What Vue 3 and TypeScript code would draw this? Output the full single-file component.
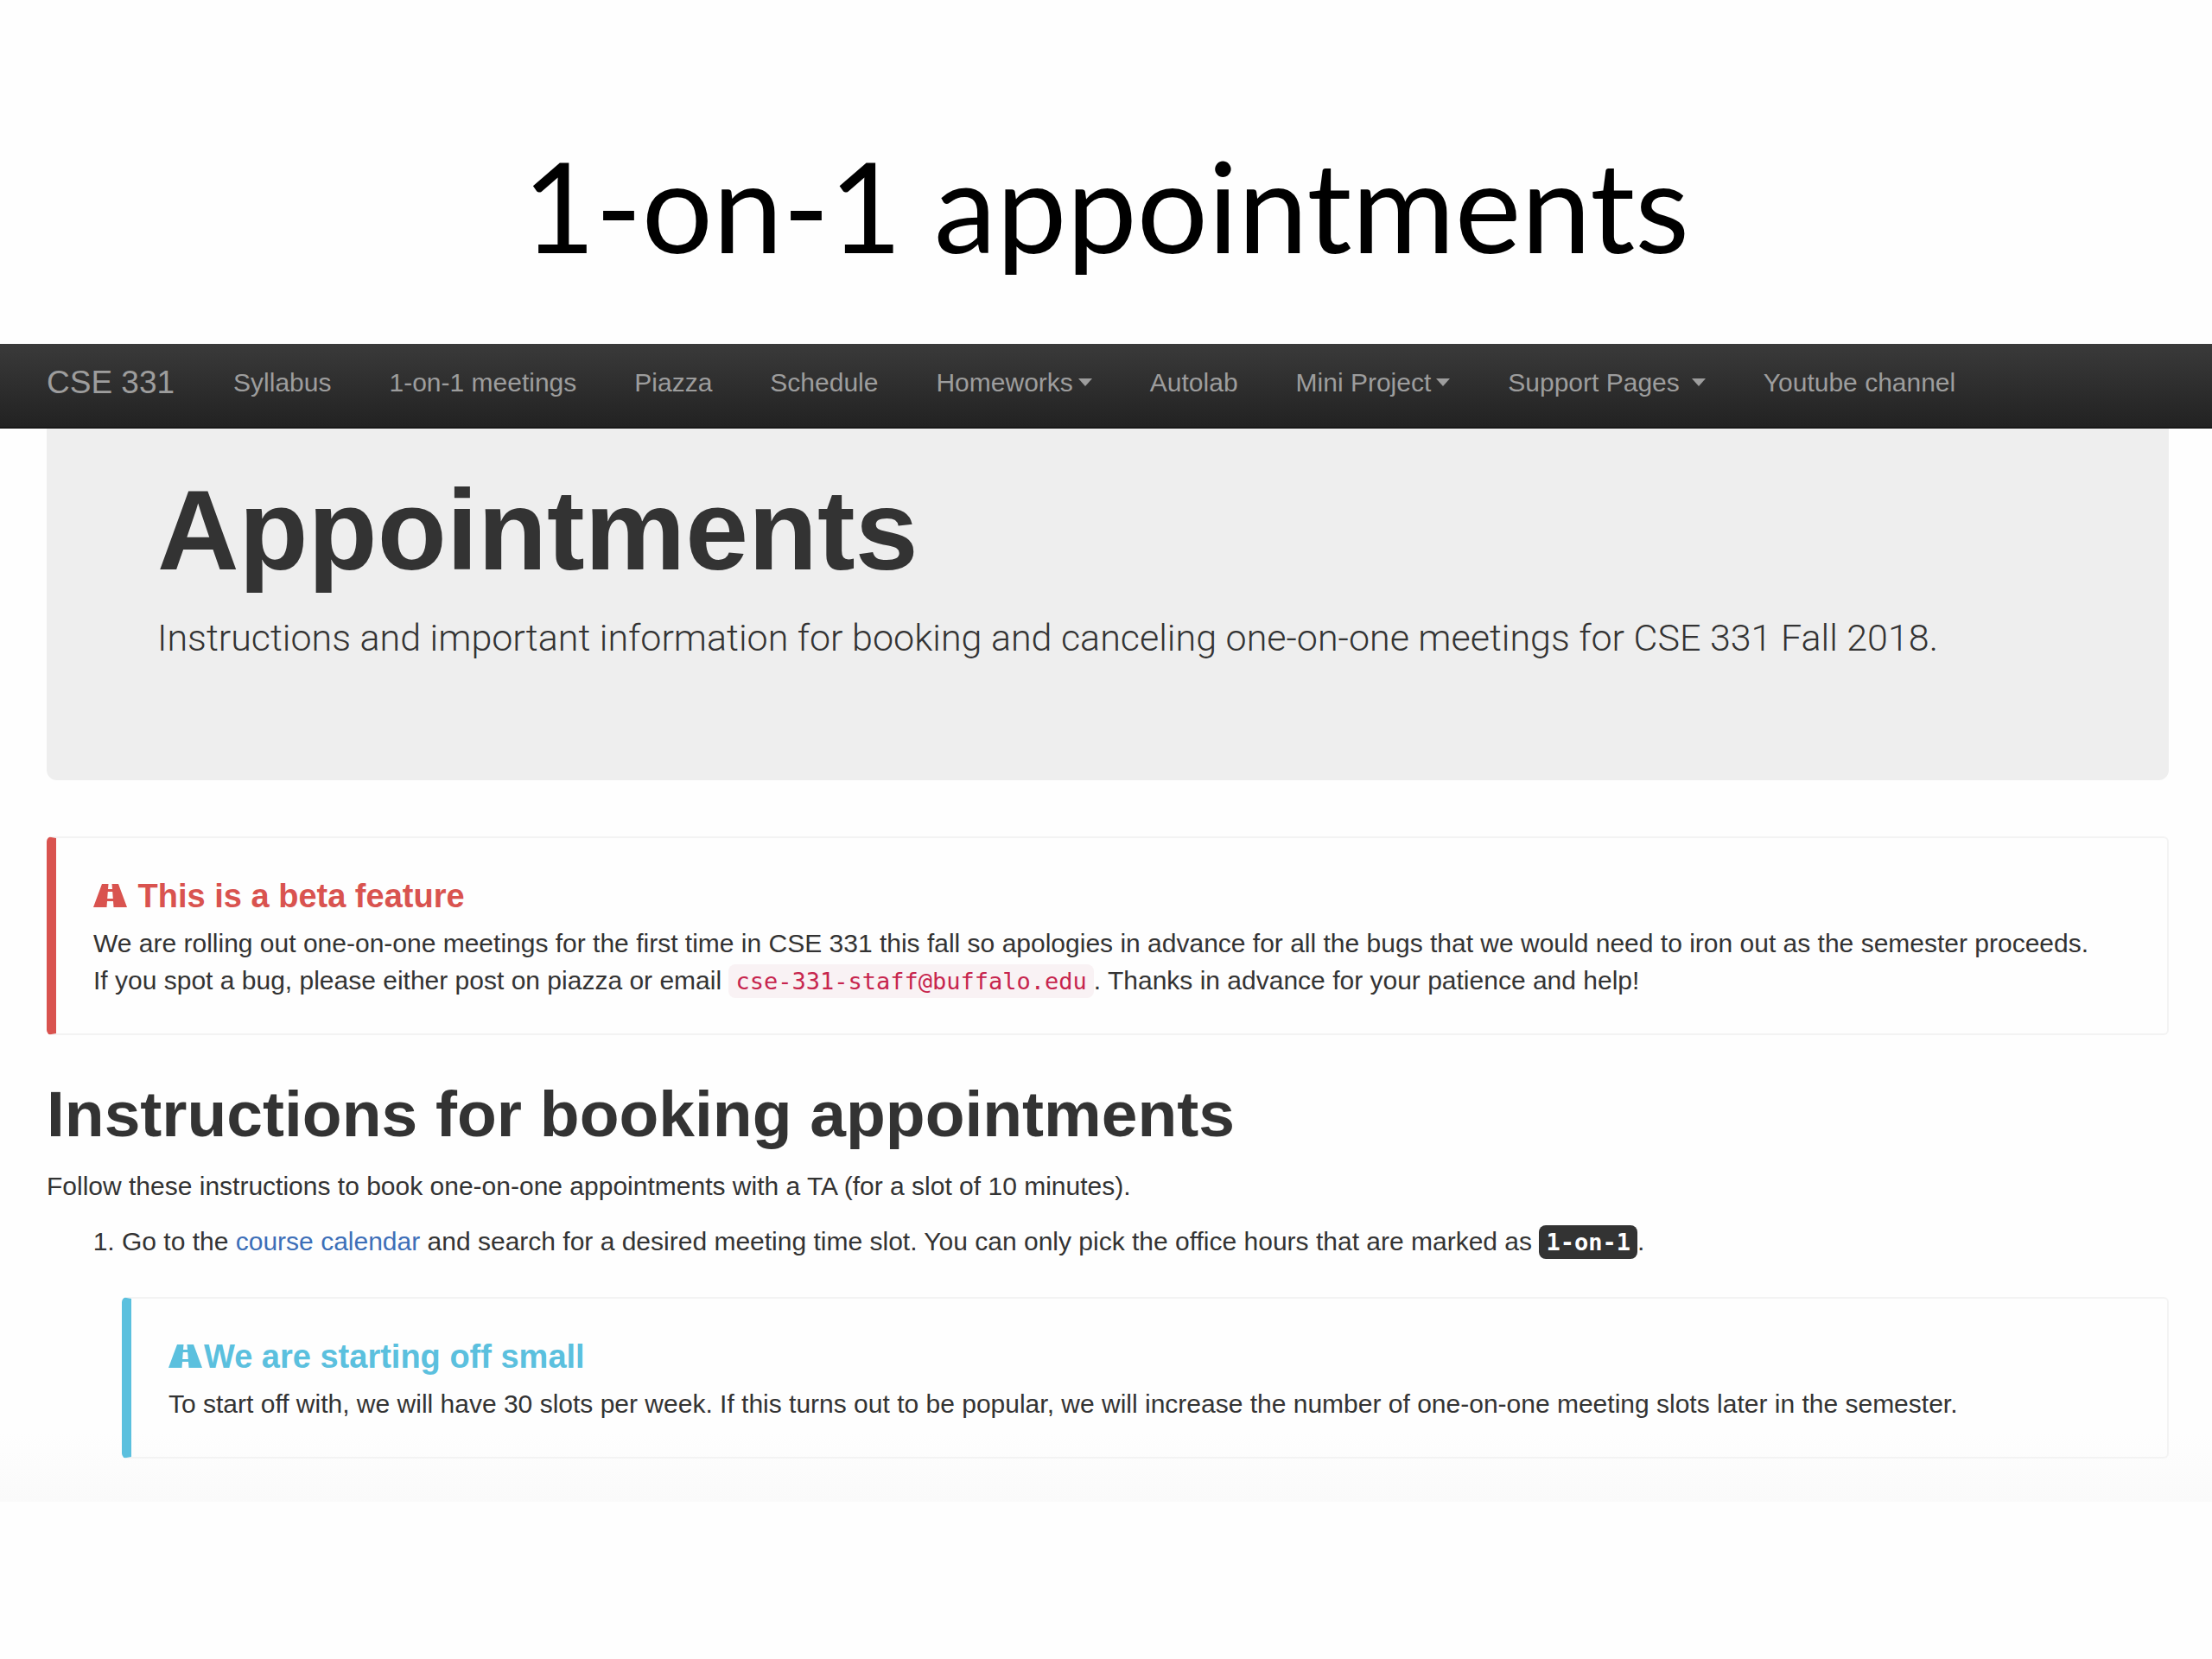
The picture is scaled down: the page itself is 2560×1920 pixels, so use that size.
<script setup lang="ts">
interface NavItem {
  label: string
  menu?: boolean
  spaced?: boolean
}

const navItems: NavItem[] = [
  { label: 'Syllabus' },
  { label: '1-on-1 meetings' },
  { label: 'Piazza' },
  { label: 'Schedule' },
  { label: 'Homeworks', menu: true },
  { label: 'Autolab' },
  { label: 'Mini Project', menu: true },
  { label: 'Support Pages', menu: true, spaced: true },
  { label: 'Youtube channel' },
]
</script>

<template>
  <div class="slide">
    <h1 class="slide-title">1-on-1 appointments</h1>

    <div class="site">
      <nav class="navbar" aria-label="Main">
        <a class="brand" href="#">CSE 331</a>
        <ul class="nav-list">
          <li v-for="item in navItems" :key="item.label">
            <button v-if="item.menu" type="button" class="nav-link" :class="{ spaced: item.spaced }">
              {{ item.label }}<span class="caret"></span>
            </button>
            <a v-else class="nav-link" href="#">{{ item.label }}</a>
          </li>
        </ul>
      </nav>

      <main class="container">
        <header class="jumbotron">
          <h1>Appointments</h1>
          <p>Instructions and important information for booking and canceling one-on-one meetings for CSE 331 Fall 2018.</p>
        </header>

        <section class="callout danger">
          <h4>
            <svg class="road" viewBox="0 0 39 27" aria-hidden="true">
              <path fill-rule="evenodd" d="M10 0H17.500L17 6H22L21.500 0H29L39 27H23.500L23 20H16L15.500 27H0ZM16.800 9L16.200 17H22.800L22.200 9Z" />
            </svg>
            This is a beta feature
          </h4>
          <p>
            We are rolling out one-on-one meetings for the first time in CSE 331 this fall so apologies in advance for all the bugs that we would need to iron out as the semester proceeds.<br>
            If you spot a bug, please either post on piazza or email <code>cse-331-staff@buffalo.edu</code>. Thanks in advance for your patience and help!
          </p>
        </section>

        <h2>Instructions for booking appointments</h2>
        <p class="intro">Follow these instructions to book one-on-one appointments with a TA (for a slot of 10 minutes).</p>

        <ol>
          <li>
            Go to the <a href="#">course calendar</a> and search for a desired meeting time slot. You can only pick the office hours that are marked as <kbd>1-on-1</kbd>.
            <section class="callout info">
              <h4><svg class="road" viewBox="0 0 39 27" aria-hidden="true"><path fill-rule="evenodd" d="M10 0H17.500L17 6H22L21.500 0H29L39 27H23.500L23 20H16L15.500 27H0ZM16.800 9L16.200 17H22.800L22.200 9Z" /></svg>We are starting off small</h4>
              <p>To start off with, we will have 30 slots per week. If this turns out to be popular, we will increase the number of one-on-one meeting slots later in the semester.</p>
            </section>
          </li>
        </ol>
      </main>
    </div>
  </div>
</template>

<style>
body {
  background: #fefefe;
}
</style>

<style scoped>
.slide {
  color: #333;
  font-family: "Liberation Sans", Arial, sans-serif;
  font-size: 30px;
  line-height: 43px;
}

h1,
h2,
h4,
p,
ol,
ul {
  margin: 0;
}

.slide-title {
  padding: 153px 0 77px;
  color: #000;
  font-family: Lato, Calibri, sans-serif;
  font-size: 145px;
  font-weight: 400;
  line-height: 168px;
  text-align: center;
}

.site {
  padding-bottom: 50px;
  background: linear-gradient(to top, #fafafa, #fefefe 80px);
}

.navbar {
  display: flex;
  align-items: center;
  gap: 68px;
  height: 98px;
  padding: 0 50px 8px 54px;
  box-sizing: border-box;
  border-bottom: 2px solid #181818;
  background: linear-gradient(#3a3a3a, #222);
  color: #9d9d9d;
}

.brand {
  color: inherit;
  font-size: 37px;
  text-decoration: none;
}

.nav-list {
  display: flex;
  gap: 67px;
  padding: 0;
  list-style: none;
}

.nav-link {
  display: inline-flex;
  align-items: center;
  gap: 6px;
  padding: 0;
  border: 0;
  background: none;
  color: inherit;
  font: inherit;
  text-decoration: none;
}

.nav-link.spaced {
  gap: 14px;
}

.caret {
  border-top: 9px solid currentColor;
  border-right: 8px solid transparent;
  border-left: 8px solid transparent;
}

.container {
  padding: 0 50px 0 54px;
}

.jumbotron {
  margin-bottom: 65px;
  padding: 52px 128px 133px;
  border-radius: 0 0 12px 12px;
  background: #eee;
}

.jumbotron h1 {
  margin-bottom: 26px;
  font-size: 131px;
  line-height: 132px;
}

.jumbotron p {
  font-family: Roboto, "Liberation Sans", sans-serif;
  font-size: 43px;
  font-weight: 300;
  line-height: 64px;
}

.callout {
  padding: 44px 43px 40px;
  border: 2px solid #f3f3f3;
  border-left-width: 11px;
  border-radius: 6px;
}

.callout h4 {
  margin-bottom: 10px;
  font-size: 38px;
  line-height: 46px;
}

.danger {
  border-left-color: #d9534f;
}

.danger h4 {
  color: #d9534f;
}

.info {
  margin-top: 43px;
  border-left-color: #5bc0de;
}

.info h4 {
  color: #5bc0de;
}

.road {
  width: 39px;
  height: 27px;
  margin-right: 2px;
  fill: currentColor;
}

h2 {
  margin: 50px 0 21px;
  font-size: 75px;
  line-height: 82px;
}

ol {
  margin-top: 21px;
  padding-left: 87px;
}

ol a {
  color: #3d6fb8;
  text-decoration: none;
}

code,
kbd {
  padding: 4px 8px;
  border-radius: 8px;
  font-family: "DejaVu Sans Mono", Menlo, monospace;
  font-size: 27px;
  line-height: 27px;
}

code {
  background: #f9f2f4;
  color: #c7254e;
}

kbd {
  background: #333;
  color: #fff;
  font-weight: 700;
}
</style>
